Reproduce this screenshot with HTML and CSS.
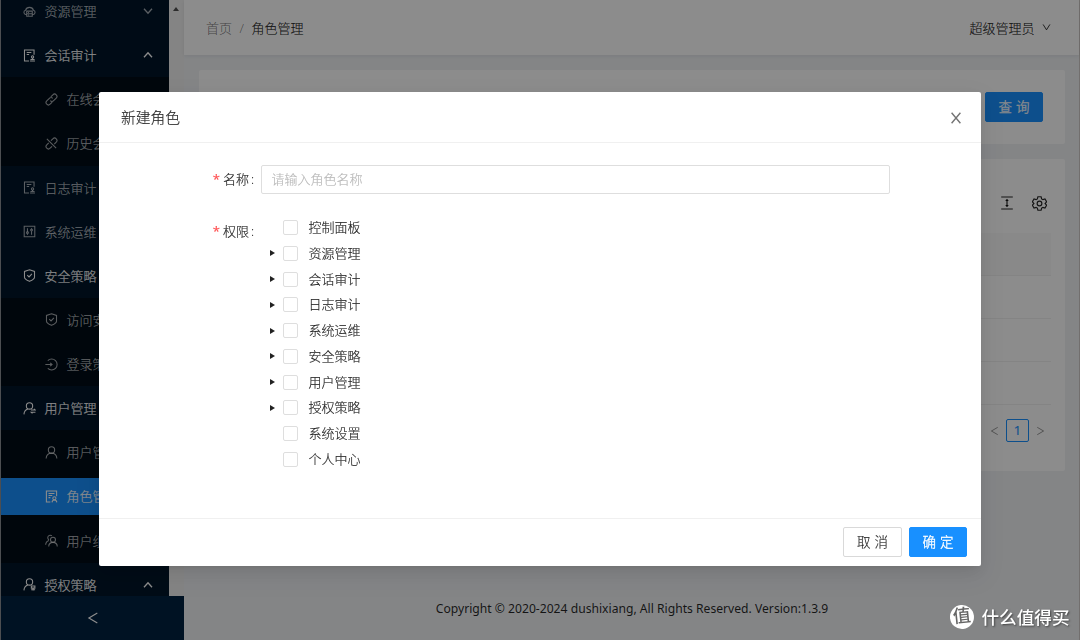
FILE: index.html
```html
<!DOCTYPE html>
<html lang="zh-CN">
<head>
    <meta charset="UTF-8">
    <meta name="viewport" content="width=device-width, initial-scale=1.0">
    <title>角色管理</title>
    <link rel="stylesheet" href="styles.css">
</head>
<body>
    <svg class="sprite" width="0" height="0">
        <symbol id="i-cloud" viewBox="0 0 14 14"><path d="M3.6 10.2H3A2.3 2.3 0 0 1 2.7 5.7 4.5 4.5 0 0 1 11.3 5.7 2.3 2.3 0 0 1 11 10.2h-.6M4 6.6h6v5.6H4zM4 9.4h6M5.5 8h1M5.5 10.8h1"/></symbol>
        <symbol id="i-audit" viewBox="0 0 14 14"><path d="M6.5 12.9H1.6V1.1h10.3v5.2M4 3.8h5M4 6h2.6M7.6 12.9h5.3M8 11.4h4.5M10.3 11V9.6"/><circle cx="10.3" cy="8.5" r="1.2"/></symbol>
        <symbol id="i-link" viewBox="0 0 14 14"><path d="M6.2 4.2 8.5 1.9a2.5 2.5 0 0 1 3.6 3.6L9.3 8.3a2.5 2.5 0 0 1-3.6 0M7.8 9.8 5.5 12.1a2.5 2.5 0 0 1-3.6-3.6L4.7 5.7a2.5 2.5 0 0 1 3.6 0"/></symbol>
        <symbol id="i-unlink" viewBox="0 0 14 14"><path d="M6.4 4 8.5 1.9a2.5 2.5 0 0 1 3.6 3.6L10 7.6M7.6 10 5.5 12.1a2.5 2.5 0 0 1-3.6-3.6L4 6.4M2 2l10 10"/></symbol>
        <symbol id="i-control" viewBox="0 0 14 14"><path d="M1.3 1.3h11.4v11.4H1.3zM4.8 3.6v3.6M4.8 9.6v.8M9.2 3.6v.8M9.2 6.8v3.6"/><circle cx="4.8" cy="8.4" r="1"/><circle cx="9.2" cy="5.5" r="1"/></symbol>
        <symbol id="i-safety" viewBox="0 0 14 14"><path d="M7 .9 12.4 2.6v6.2c0 1.5-3 3.4-5.4 4.5-2.4-1.1-5.4-3-5.4-4.5V2.6zM4.6 6.6l1.9 1.9 3.1-3.3"/></symbol>
        <symbol id="i-login" viewBox="0 0 14 14"><path d="M3 2.8A5.9 5.9 0 1 1 3 11.2M.4 7h7M5.6 5.2 7.6 7 5.6 8.8"/></symbol>
        <symbol id="i-userswitch" viewBox="0 0 14 14"><circle cx="7" cy="4.3" r="3.4"/><path d="M1 13.3C1.3 10 3 8.3 5.2 7.6M8.6 8.6h4.6l-1.4-1.2M13.4 11H8.8l1.4 1.3"/></symbol>
        <symbol id="i-user" viewBox="0 0 14 14"><circle cx="7" cy="4.3" r="3.4"/><path d="M1.2 13.4C1.4 9.8 4 7.8 7 7.8s5.6 2 5.8 5.6"/></symbol>
        <symbol id="i-solution" viewBox="0 0 14 14"><path d="M5.8 12.9H1.5V1.1h11v5.5M3.8 3.8h6.4M3.8 6h4M3.8 8.2h2M7.6 13.3c.1-1.6 1-2.5 2.5-2.5s2.5.9 2.6 2.5"/><circle cx="10.1" cy="8.9" r="1.7"/></symbol>
        <symbol id="i-team" viewBox="0 0 14 14"><circle cx="8.6" cy="6.2" r="2.7"/><path d="M4 13.4c.1-2.8 2-4.4 4.6-4.4s4.5 1.6 4.6 4.4M7.4 1.9A2.7 2.7 0 1 0 4.3 6.3M.7 11.6C.8 9.3 2 7.6 4.3 6.9"/></symbol>
        <symbol id="i-insurance" viewBox="0 0 14 14"><circle cx="7" cy="4.3" r="3.4"/><path d="M1 13.3C1.3 10 3 8.3 5.2 7.6M9 8.6h3.8v2.3H9zM8.8 12.6h4.2M10.9 10.9v2.6"/></symbol>
        <symbol id="i-down" viewBox="0 0 10 10"><path d="M1 2.8 5 7.3 9 2.8"/></symbol>
        <symbol id="i-down-deep" viewBox="0 0 10 10"><path d="M1.2 1.6 5 7.6 8.8 1.6"/></symbol>
        <symbol id="i-left" viewBox="0 0 10 10"><path d="M8.6.9 1.6 5l7 4.1"/></symbol>
        <symbol id="i-close" viewBox="0 0 12 12"><path d="M1.6.8 10.4 11.2M10.4.8 1.6 11.2"/></symbol>
        <symbol id="i-height" viewBox="0 0 14 14"><path d="M1.2 1h11.6M1.2 13h11.6M7 3.8v6.4"/><path d="M5.2 5 7 2.8 8.8 5zM5.2 9 7 11.2 8.8 9z" fill="currentColor" stroke="none"/></symbol>
        <symbol id="i-setting" viewBox="0 0 14 14"><path d="M5.5.7h3l.5 2 1.2.7 1.9-.6 1.5 2.6L12.2 7l1.4 1.6-1.5 2.6-1.9-.6-1.2.7-.5 2h-3l-.5-2-1.2-.7-1.9.6L.4 8.6 1.8 7 .4 5.4 1.9 2.8l1.9.6L5 2.7z"/><circle cx="7" cy="7" r="2.2"/></symbol>
    </svg>

    <div class="layout">
        <div class="sider">
            <div class="menu-area">
                <div class="menu">
                    <div class="item"><svg class="icon"><use href="#i-cloud"/></svg>资源管理<svg class="arrow"><use href="#i-down"/></svg></div>
                    <div class="item open"><svg class="icon"><use href="#i-audit"/></svg>会话审计<svg class="arrow up"><use href="#i-down"/></svg></div>
                    <div class="submenu">
                        <div class="item"><svg class="icon"><use href="#i-link"/></svg>在线会话</div>
                        <div class="item"><svg class="icon"><use href="#i-unlink"/></svg>历史会话</div>
                    </div>
                    <div class="item"><svg class="icon"><use href="#i-audit"/></svg>日志审计</div>
                    <div class="item"><svg class="icon"><use href="#i-control"/></svg>系统运维</div>
                    <div class="item open"><svg class="icon"><use href="#i-safety"/></svg>安全策略</div>
                    <div class="submenu">
                        <div class="item"><svg class="icon"><use href="#i-safety"/></svg>访问安全</div>
                        <div class="item"><svg class="icon"><use href="#i-login"/></svg>登录策略</div>
                    </div>
                    <div class="item open"><svg class="icon"><use href="#i-userswitch"/></svg>用户管理</div>
                    <div class="submenu">
                        <div class="item"><svg class="icon"><use href="#i-user"/></svg>用户管理</div>
                        <div class="item selected"><svg class="icon"><use href="#i-solution"/></svg>角色管理</div>
                        <div class="item"><svg class="icon"><use href="#i-team"/></svg>用户组管理</div>
                    </div>
                    <div class="item open"><svg class="icon"><use href="#i-insurance"/></svg>授权策略<svg class="arrow up"><use href="#i-down"/></svg></div>
                </div>
                <div class="scrollbar"><span class="scroll-up"></span></div>
            </div>
            <div class="trigger"><svg><use href="#i-left"/></svg></div>
        </div>

        <div class="main">
            <div class="header">
                <div class="breadcrumb"><span>首页</span><span class="sep">/</span><b>角色管理</b></div>
                <div class="account">超级管理员<svg><use href="#i-down-deep"/></svg></div>
            </div>
            <div class="card search">
                <button class="btn primary">查 询</button>
            </div>
            <div class="card list">
                <div class="toolbar">
                    <svg><use href="#i-height"/></svg>
                    <svg class="gear"><use href="#i-setting"/></svg>
                </div>
                <div class="table">
                    <div class="tr th"></div>
                    <div class="tr"></div>
                    <div class="tr"></div>
                    <div class="tr"></div>
                </div>
                <div class="pagination">
                    <svg><use href="#i-left"/></svg>
                    <span class="page">1</span>
                    <svg class="next"><use href="#i-left"/></svg>
                </div>
            </div>
            <div class="footer"><span>Copyright © 2020-2024 dushixiang, All Rights Reserved. Version:1.3.9</span></div>
        </div>
    </div>

    <div class="mask">
        <div class="modal">
            <div class="modal-header">新建角色<svg><use href="#i-close"/></svg></div>
            <div class="modal-body">
                <div class="form-row">
                    <label for="name"><i>*</i>名称<em>:</em></label>
                    <input type="text" id="name" placeholder="请输入角色名称">
                </div>
                <div class="form-row perms">
                    <label><i>*</i>权限<em>:</em></label>
                    <div class="tree">
                        <div class="node leaf"><span class="caret"></span><span class="check"></span><span class="title">控制面板</span></div>
                        <div class="node"><span class="caret"></span><span class="check"></span><span class="title">资源管理</span></div>
                        <div class="node"><span class="caret"></span><span class="check"></span><span class="title">会话审计</span></div>
                        <div class="node"><span class="caret"></span><span class="check"></span><span class="title">日志审计</span></div>
                        <div class="node"><span class="caret"></span><span class="check"></span><span class="title">系统运维</span></div>
                        <div class="node"><span class="caret"></span><span class="check"></span><span class="title">安全策略</span></div>
                        <div class="node"><span class="caret"></span><span class="check"></span><span class="title">用户管理</span></div>
                        <div class="node"><span class="caret"></span><span class="check"></span><span class="title">授权策略</span></div>
                        <div class="node leaf"><span class="caret"></span><span class="check"></span><span class="title">系统设置</span></div>
                        <div class="node leaf"><span class="caret"></span><span class="check"></span><span class="title">个人中心</span></div>
                    </div>
                </div>
            </div>
            <div class="modal-footer">
                <button class="btn">取 消</button>
                <button class="btn primary">确 定</button>
            </div>
        </div>
    </div>

    <div class="watermark"><span class="logo">值</span>什么值得买</div>
</body>
</html>
```
FILE: styles.css
```css
* {
    box-sizing: border-box;
}
body {
    margin: 0;
    height: 640px;
    overflow: hidden;
    font-family: "Open Sans", "Noto Sans CJK SC", sans-serif;
    font-size: 13px;
    font-weight: 300;
    color: rgba(0, 0, 0, 0.85);
    -webkit-text-stroke: 0.15px;
}
svg {
    fill: none;
    stroke: currentColor;
    stroke-width: 1;
    flex: none;
}
.sprite {
    display: block;
}
.layout {
    display: flex;
    height: 640px;
    background: #f0f2f5;
    border-left: 1px solid #8a8f94;
    border-right: 1px solid #cfcbc8;
}

/* sider */
.sider {
    width: 183px;
    flex: none;
    display: flex;
    flex-direction: column;
}
.menu-area {
    display: flex;
    height: 596px;
    overflow: hidden;
}
.menu {
    display: flex;
    flex-direction: column;
    width: 168px;
    margin-top: -11px;
    background: #001529;
    color: rgba(255, 255, 255, 0.65);
}
.item {
    display: flex;
    flex: none;
    align-items: center;
    height: 37px;
    margin: 3.57px 0;
    padding-left: 22px;
    padding-bottom: 1px;
    white-space: nowrap;
}
.item.open {
    color: #fff;
}
.icon {
    width: 13px;
    height: 13px;
    margin: 1px 8.5px 0 0;
    stroke-width: 1.15;
}
.arrow {
    width: 10px;
    height: 10px;
    margin: 1px 16px 0 auto;
    stroke-width: 1.3;
}
.up {
    transform: rotate(180deg);
}
.submenu {
    display: flex;
    flex-direction: column;
    flex: none;
    background: #000c17;
}
.submenu .item {
    padding-left: 44px;
}
.submenu .item.selected {
    background: #1890ff;
    color: #fff;
}
.scrollbar {
    width: 15px;
    background: #f1f1f1;
    padding: 7px 0 0 4px;
}
.scroll-up {
    display: block;
    width: 0;
    border: 3.5px solid transparent;
    border-top: 0;
    border-bottom: 4px solid #505050;
}
.trigger {
    flex: 1;
    display: flex;
    align-items: center;
    justify-content: center;
    background: #002140;
    color: #fff;
}
.trigger svg {
    width: 12px;
    height: 12px;
}

/* content */
.main {
    flex: 1;
}
.header {
    display: flex;
    justify-content: space-between;
    height: 55px;
    padding: 1px 28px 0 22px;
    line-height: 55px;
    background: #fff;
    box-shadow: 0 1px 4px rgba(0, 21, 41, 0.08);
}
.breadcrumb {
    color: rgba(0, 0, 0, 0.45);
}
.breadcrumb .sep {
    margin: 0 7.5px;
}
.breadcrumb b {
    font-weight: 300;
    color: rgba(0, 0, 0, 0.85);
}
.account {
    display: flex;
    align-items: center;
}
.account svg {
    width: 9px;
    height: 9px;
    margin: 0 0 2px 7.5px;
}
.card {
    margin: 15px 14px 0 15px;
    background: #fff;
    border-radius: 2px;
}
.search {
    height: 74px;
    padding: 22px;
    text-align: right;
}
.list {
    height: 312px;
    padding: 0 14px;
}
.toolbar {
    display: flex;
    justify-content: flex-end;
    align-items: center;
    gap: 18.5px;
    height: 74px;
    padding: 14px 4px 0 0;
}
.toolbar svg {
    width: 14px;
    height: 14px;
    stroke-width: 1.2;
}
.toolbar .gear {
    width: 15px;
    height: 15px;
    stroke-width: 1.1;
}
.tr {
    height: 43px;
    border-bottom: 1px solid #f0f0f0;
}
.th {
    background: #fafafa;
}
.pagination {
    display: flex;
    align-items: center;
    justify-content: flex-end;
    gap: 7px;
    margin-top: 14px;
    padding-right: 6px;
    color: rgba(0, 0, 0, 0.45);
}
.pagination svg {
    width: 9px;
    height: 10px;
}
.pagination .next {
    transform: rotate(180deg);
}
.page {
    width: 23px;
    height: 23px;
    line-height: 21px;
    text-align: center;
    border: 1px solid #1890ff;
    border-radius: 2px;
    color: #1890ff;
    font-weight: 500;
}
.footer {
    margin-top: 129px;
    padding-left: 1px;
    text-align: center;
    line-height: 18px;
    font-family: "Noto Sans", sans-serif;
    font-weight: 400;
    font-size: 12.15px;
    -webkit-text-stroke: 0;
}

.btn {
    height: 30px;
    width: 59px;
    padding: 0;
    border: 1px solid #d9d9d9;
    border-radius: 2px;
    background: #fff;
    color: rgba(0, 0, 0, 0.85);
    font: inherit;
    font-size: 13.5px;
    line-height: 26px;
    word-spacing: 0.5px;
}
.btn.primary {
    width: 58px;
    background: #1890ff;
    border-color: #1890ff;
    color: #fff;
    -webkit-text-stroke: 0.3px;
}

/* modal */
.mask {
    position: fixed;
    top: 0;
    left: 0;
    width: 100%;
    height: 100%;
    padding: 92px 0 0 99px;
    background: rgba(0, 0, 0, 0.45);
}
.modal {
    display: flex;
    flex-direction: column;
    width: 882px;
    height: 474px;
    background: #fff;
    border-radius: 2px;
    box-shadow: 0 3px 6px -4px rgba(0, 0, 0, 0.12), 0 6px 16px rgba(0, 0, 0, 0.08), 0 9px 28px 8px rgba(0, 0, 0, 0.05);
}
.modal-header {
    display: flex;
    align-items: center;
    justify-content: space-between;
    height: 51px;
    padding: 0 19px 2px 22px;
    border-bottom: 1px solid #f0f0f0;
    font-size: 14.75px;
}
.modal-header svg {
    width: 12px;
    height: 12px;
    margin-top: 3px;
    color: rgba(0, 0, 0, 0.55);
    stroke-width: 1.4;
}
.modal-body {
    flex: 1;
    padding-top: 22px;
}
.form-row {
    display: flex;
}
.form-row label {
    width: 162px;
    padding-right: 7px;
    line-height: 29px;
    display: flex;
    justify-content: flex-end;
}
label i {
    margin-right: 3px;
    color: #ff4d4f;
    font-style: normal;
    font-weight: 400;
}
label em {
    margin-left: 2px;
    font-style: normal;
}
input {
    width: 629px;
    height: 29px;
    padding: 0 10px 1px 9.5px;
    border: 1px solid #dedede;
    border-radius: 2px;
    font: inherit;
}
input::placeholder {
    color: #b8b8b8;
}
.perms {
    margin-top: 21px;
}
.perms label {
    padding-top: 2px;
}
.node {
    display: flex;
    align-items: center;
    height: 25.75px;
}
.title {
    padding-bottom: 2px;
}
.tree {
    margin-top: -0.3px;
}
.caret {
    margin: 0 8px 0 9px;
    border: 3.5px solid transparent;
    border-left: 5px solid #222;
    border-right: 0;
}
.leaf .caret {
    visibility: hidden;
}
.check {
    width: 15px;
    height: 15px;
    margin-right: 10.5px;
    border: 1px solid #dedede;
    border-radius: 2px;
}
.modal-footer {
    display: flex;
    justify-content: flex-end;
    gap: 7px;
    height: 48px;
    padding: 8px 14px 0 0;
    border-top: 1px solid #f0f0f0;
}

.watermark {
    position: absolute;
    right: 10.5px;
    top: 603px;
    display: flex;
    align-items: center;
    height: 26px;
    color: #fff;
    font-size: 17.6px;
    font-weight: 500;
    text-shadow: 1px 1px 2px rgba(0, 0, 0, 0.5);
    -webkit-text-stroke: 0;
}
.logo {
    width: 24px;
    height: 24px;
    margin: 2px 8px 0 0;
    border-radius: 50%;
    background: #fff;
    color: #666;
    font-size: 18px;
    line-height: 21px;
    text-align: center;
    text-shadow: none;
    transform: rotate(-6deg);
}
```
